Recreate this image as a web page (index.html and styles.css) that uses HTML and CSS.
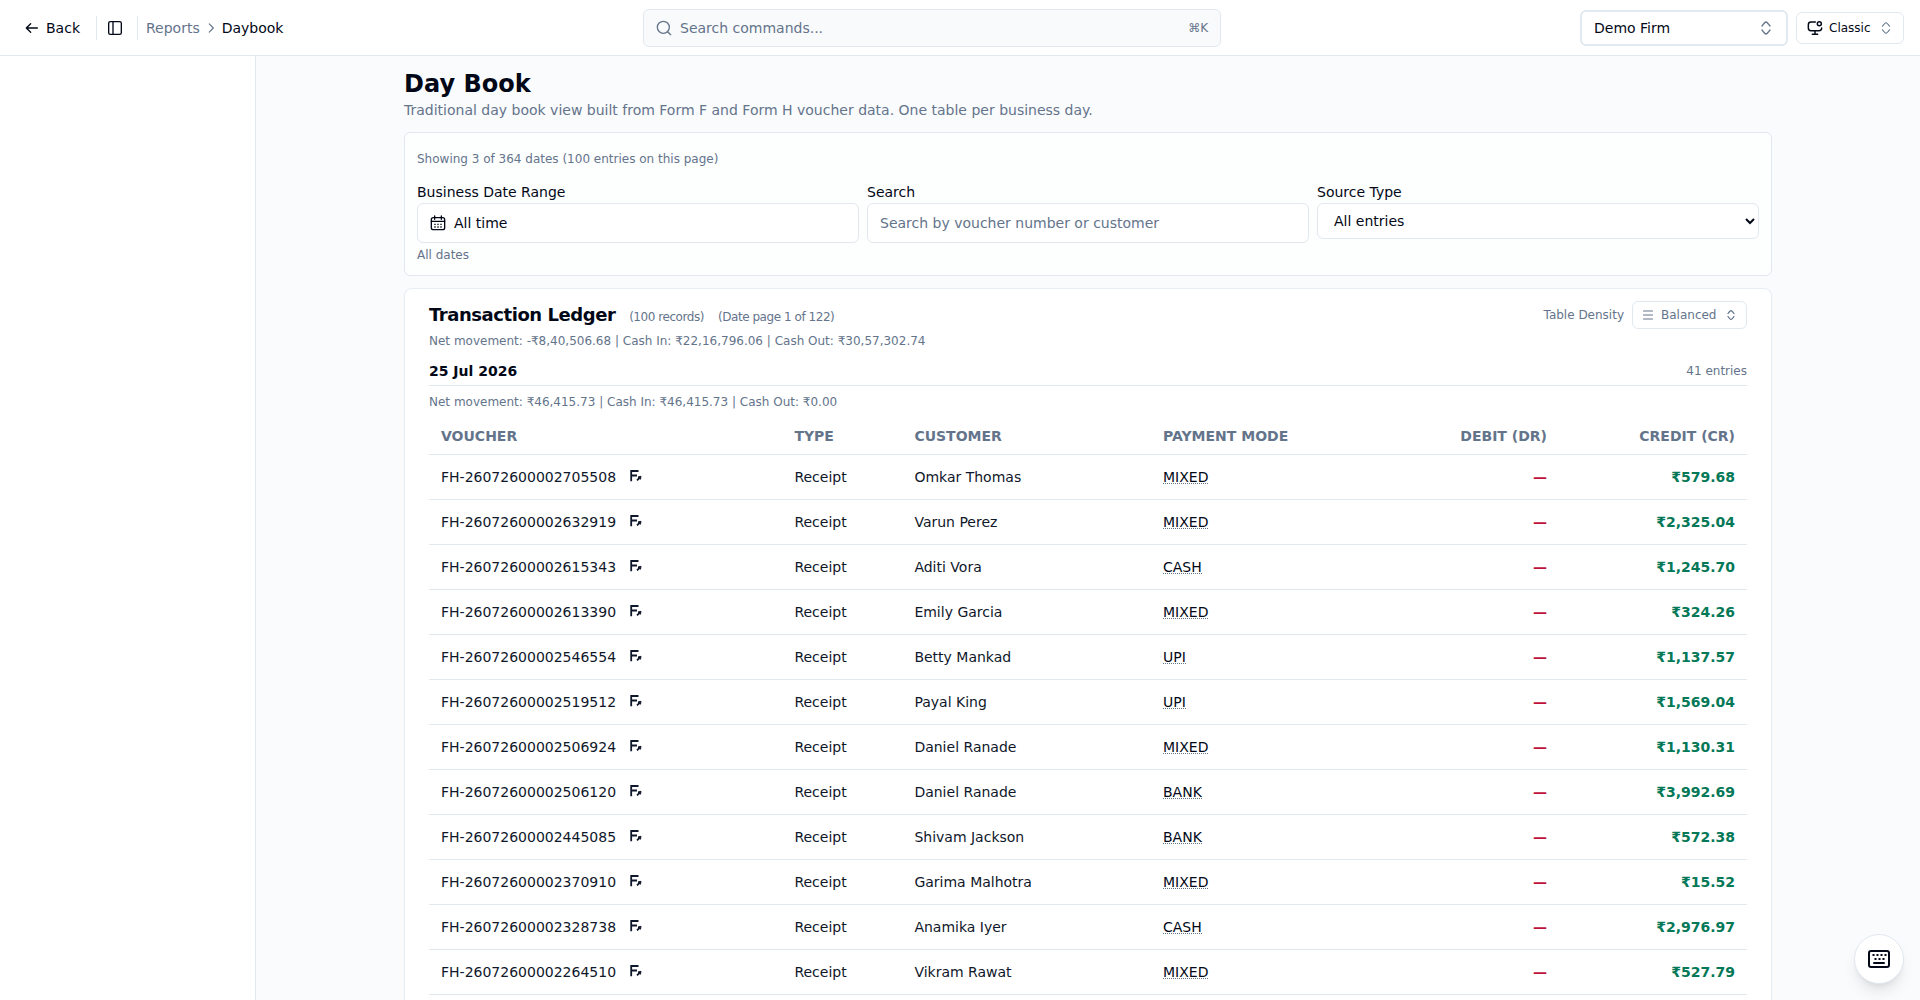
FILE: index.html
```html
<!DOCTYPE html>
<html lang="en">
<head>
    <meta charset="UTF-8">
    <meta name="viewport" content="width=device-width, initial-scale=1.0">
    <title>Day Book</title>
    <link rel="stylesheet" href="styles.css">
</head>
<body>
    <svg class="sprite">
        <symbol id="updown" viewBox="0 0 24 24"><path d="M18 9s-4.400-6-6-6-6 6-6 6M18 15s-4.400 6-6 6-6-6-6-6"/></symbol>
        <symbol id="open-form" viewBox="0 0 14 14"><path d="M2.200 12.300V2H9.500M2.200 6.500H8M8 11.300L10.500 9"/><path class="tip" d="M9 8L12 7.300L11.500 10.200Z"/></symbol>
    </svg>

    <header class="topbar">
        <div class="topbar-left">
            <button class="back">
                <svg class="icon" viewBox="0 0 24 24"><path d="M4 12h16M10 5.500L3.500 12l6.500 6.500"/></svg>
                Back
            </button>
            <span class="divider"></span>
            <button class="toggle">
                <svg class="icon" viewBox="0 0 24 24"><rect x="2.500" y="2.500" width="19" height="19" rx="2.500"/><path d="M9 2.500v19"/></svg>
            </button>
            <span class="divider"></span>
            <nav class="crumbs">
                <span>Reports</span>
                <svg class="crumb-icon" viewBox="0 0 24 24"><path d="M9 5l7 7-7 7"/></svg>
                <b>Daybook</b>
            </nav>
        </div>
        <button class="command">
            <svg class="icon" viewBox="0 0 24 24"><circle cx="11" cy="11" r="9"/><path d="M17.500 17.500L22 22"/></svg>
            <span>Search commands...</span>
            <kbd>⌘K</kbd>
        </button>
        <div class="topbar-right">
            <button class="firm">Demo Firm <svg class="icon"><use href="#updown"/></svg></button>
            <button class="layout">
                <svg class="layout-icon" viewBox="0 0 24 24"><path d="M12.500 3H6C3 3 2 4 2 7v5c0 3 1 4 4 4h12c3 0 4-1 4-4M12 16v5M8 21.500h8"/><circle cx="18.500" cy="5.500" r="3"/></svg>
                Classic
                <svg class="layout-arrows"><use href="#updown"/></svg>
            </button>
        </div>
    </header>

    <div class="shell">
        <aside class="sidebar"></aside>
        <main class="content">
            <h1>Day Book</h1>
            <p class="subtitle">Traditional day book view built from Form F and Form H voucher data. One table per business day.</p>

            <section class="filters">
                <p class="note">Showing 3 of 364 dates (100 entries on this page)</p>
                <div class="filter-grid">
                    <div class="field">
                        <label>Business Date Range</label>
                        <button class="control date-btn">
                            <svg class="icon" viewBox="0 0 24 24"><rect x="2" y="4" width="20" height="18" rx="3"/><path d="M7 1.500v5M17 1.500v5M2 9.500h20"/><path class="dots" d="M6.500 14h2M11 14h2M15.500 14h2M6.500 18h2M11 18h2M15.500 18h2"/></svg>
                            All time
                        </button>
                        <p class="note">All dates</p>
                    </div>
                    <div class="field">
                        <label for="search">Search</label>
                        <input class="control" id="search" type="text" placeholder="Search by voucher number or customer">
                    </div>
                    <div class="field">
                        <label for="source">Source Type</label>
                        <select class="control" id="source">
                            <option>All entries</option>
                        </select>
                    </div>
                </div>
            </section>

            <section class="ledger">
                <div class="ledger-head">
                    <h2>Transaction Ledger <span>(100 records)</span><span>(Date page 1 of 122)</span></h2>
                    <div class="density">
                        Table Density
                        <button class="density-btn">
                            <svg class="density-icon" viewBox="0 0 24 24"><path d="M3 4h18M3 12h18M3 20h18"/></svg>
                            Balanced
                            <svg class="density-icon arrows"><use href="#updown"/></svg>
                        </button>
                    </div>
                </div>
                <p class="totals">Net movement: -₹8,40,506.68 | Cash In: ₹22,16,796.06 | Cash Out: ₹30,57,302.74</p>
                <div class="day-head">
                    <h3>25 Jul 2026</h3>
                    <span>41 entries</span>
                </div>
                <p class="totals day-totals">Net movement: ₹46,415.73 | Cash In: ₹46,415.73 | Cash Out: ₹0.00</p>
                <table>
                    <thead>
                        <tr>
                            <th class="col-voucher">Voucher</th>
                            <th class="col-type">Type</th>
                            <th class="col-customer">Customer</th>
                            <th class="col-mode">Payment Mode</th>
                            <th class="col-debit num">Debit (DR)</th>
                            <th class="col-credit num">Credit (CR)</th>
                        </tr>
                    </thead>
                    <tbody id="rows"></tbody>
                </table>
            </section>
        </main>
    </div>

    <button class="shortcuts">
        <svg viewBox="0 0 24 24"><rect x="2" y="4" width="20" height="16" rx="2"/><path d="M7 16h10"/><path class="keys" d="M5.500 8h2M9.500 8h2M13.500 8h2M17.500 8h2M7.500 12h2M11.500 12h2M15.500 12h2"/></svg>
    </button>

    <script>
        const entries = [
            ['FH-26072600002705508', 'Omkar Thomas', 'MIXED', '₹579.68'],
            ['FH-26072600002632919', 'Varun Perez', 'MIXED', '₹2,325.04'],
            ['FH-26072600002615343', 'Aditi Vora', 'CASH', '₹1,245.70'],
            ['FH-26072600002613390', 'Emily Garcia', 'MIXED', '₹324.26'],
            ['FH-26072600002546554', 'Betty Mankad', 'UPI', '₹1,137.57'],
            ['FH-26072600002519512', 'Payal King', 'UPI', '₹1,569.04'],
            ['FH-26072600002506924', 'Daniel Ranade', 'MIXED', '₹1,130.31'],
            ['FH-26072600002506120', 'Daniel Ranade', 'BANK', '₹3,992.69'],
            ['FH-26072600002445085', 'Shivam Jackson', 'BANK', '₹572.38'],
            ['FH-26072600002370910', 'Garima Malhotra', 'MIXED', '₹15.52'],
            ['FH-26072600002328738', 'Anamika Iyer', 'CASH', '₹2,976.97'],
            ['FH-26072600002264510', 'Vikram Rawat', 'MIXED', '₹527.79']
        ];

        document.getElementById('rows').innerHTML = entries.map(([voucher, customer, mode, credit]) => `
            <tr>
                <td><div class="voucher">${voucher}<svg><use href="#open-form"/></svg></div></td>
                <td>Receipt</td>
                <td>${customer}</td>
                <td><span class="mode">${mode}</span></td>
                <td class="num debit">—</td>
                <td class="num credit">${credit}</td>
            </tr>`).join('');
    </script>
</body>
</html>
```
FILE: styles.css
```css
* {
    box-sizing: border-box;
}
body {
    margin: 0;
    height: 100vh;
    overflow: hidden;
    display: flex;
    flex-direction: column;
    font-family: "DejaVu Sans", sans-serif;
    font-size: 14px;
    line-height: 20px;
    color: #020817;
    background: #fff;
}
h1, h2, h3, p {
    margin: 0;
}
button, input, select {
    font: inherit;
    color: inherit;
}
button {
    display: flex;
    align-items: center;
    border: 0;
    padding: 0;
    background: none;
}
svg {
    flex: none;
    fill: none;
    stroke: currentColor;
    stroke-width: 2;
    stroke-linecap: round;
    stroke-linejoin: round;
}
.sprite {
    display: none;
}
.icon {
    width: 16px;
    height: 16px;
}

/* top bar */
.topbar {
    display: flex;
    align-items: center;
    flex: none;
    height: 56px;
    padding: 0 16px 0 24px;
    border-bottom: 1px solid #e2e8f0;
}
.topbar-left {
    display: flex;
    align-items: center;
    width: 619px;
}
.back {
    gap: 6px;
    margin-right: 16px;
}
.divider {
    width: 1px;
    height: 24px;
    background: #e2e8f0;
}
.toggle {
    width: 40px;
    padding-left: 10px;
}
.crumbs {
    display: flex;
    align-items: center;
    gap: 4px;
    margin-left: 8px;
    color: #64748b;
}
.crumbs b {
    font-weight: 400;
    color: #020817;
}
.crumb-icon {
    width: 14px;
    height: 14px;
}
.command {
    width: 578px;
    height: 38px;
    padding: 0 12px;
    gap: 8px;
    border: 1px solid #e2e8f0;
    border-radius: 6px;
    background: #f9fafc;
    color: #64748b;
}
.command kbd {
    margin-left: auto;
    font-family: inherit;
    font-size: 12px;
}
.topbar-right {
    display: flex;
    align-items: center;
    gap: 8px;
    margin-left: auto;
}
.firm {
    justify-content: space-between;
    width: 208px;
    height: 36px;
    padding: 0 12px 0 12px;
    border: 2px solid #e2e8f0;
    border-radius: 6px;
}
.firm svg, .layout-arrows {
    color: #64748b;
}
.layout {
    width: 108px;
    height: 32px;
    padding: 0 10px;
    font-size: 12px;
    border: 1px solid #e2e8f0;
    border-radius: 6px;
}
.layout-icon {
    width: 16px;
    height: 16px;
    margin-right: 6px;
    stroke-width: 2.2;
}
.layout-arrows {
    width: 14px;
    height: 14px;
    margin-left: auto;
}

.shell {
    display: flex;
    flex: 1;
    min-height: 0;
}
.sidebar {
    width: 256px;
    flex: none;
    border-right: 1px solid #e2e8f0;
}
.content {
    flex: 1;
    padding: 12px 148px 0;
    overflow: hidden;
    background: #fafbfd;
}
h1 {
    font-size: 24px;
    line-height: 32px;
}
.subtitle {
    color: #64748b;
}

/* filters */
.filters {
    height: 144px;
    margin-top: 12px;
    padding: 18px 12px 0;
    border: 1px solid #e2e8f0;
    border-radius: 6px;
    background: #fdfefe;
}
.note, .totals {
    font-size: 12px;
    line-height: 16px;
    color: #64748b;
}
.filter-grid {
    display: grid;
    grid-template-columns: repeat(3, 1fr);
    gap: 8px;
    margin-top: 15px;
}
.field label {
    display: block;
    height: 21px;
}
.control {
    display: flex;
    width: 100%;
    height: 40px;
    padding: 0 12px;
    border: 1px solid #e2e8f0;
    border-radius: 6px;
    background: #fff;
}
.control::placeholder {
    color: #64748b;
    opacity: 1;
}
select.control {
    height: 36px;
}
.date-btn {
    gap: 8px;
}
.dots {
    stroke-linecap: butt;
}
.field .note {
    margin-top: 4px;
}

/* ledger */
.ledger {
    height: 900px;
    margin-top: 12px;
    padding: 12px 24px;
    border: 1px solid #e9eef4;
    border-radius: 8px;
    background: #fff;
    box-shadow: 0 1px 2px rgba(0, 0, 0, 0.05);
}
.ledger-head {
    display: flex;
    align-items: center;
    justify-content: space-between;
    height: 28px;
}
h2 {
    padding-top: 2px;
    font-size: 18px;
    line-height: 28px;
    letter-spacing: -0.45px;
}
h2 span {
    margin-left: 8px;
    font-size: 12px;
    font-weight: 400;
    color: #64748b;
}
h2 span + span {
    margin-left: 14px;
}
.density {
    display: flex;
    align-items: center;
    gap: 8px;
    font-size: 12px;
    color: #64748b;
}
.density-btn {
    width: 115px;
    height: 28px;
    padding: 0 9px;
    border: 1px solid #e2e8f0;
    border-radius: 6px;
}
.density-icon {
    width: 12px;
    height: 12px;
    margin-right: 7px;
    stroke-width: 2.3;
}
.density-icon.arrows {
    margin: 0 0 0 auto;
    stroke-width: 2.5;
}
.totals {
    margin-top: 4px;
}
.day-head {
    display: flex;
    align-items: center;
    justify-content: space-between;
    height: 29px;
    margin-top: 8px;
    padding-bottom: 1px;
    border-bottom: 1px solid #e2e8f0;
    font-size: 12px;
    color: #64748b;
}
h3 {
    font-size: 14px;
    color: #020817;
}
.day-totals {
    margin: 8px 0;
}
table {
    width: 100%;
    table-layout: fixed;
    border-spacing: 0;
}
th, td {
    padding: 0 12px;
    text-align: left;
    border-bottom: 1px solid #e2e8f0;
}
th {
    height: 37px;
    color: #64748b;
    text-transform: uppercase;
}
td {
    height: 45px;
    color: #0f172a;
}
.col-voucher { width: 353.4px; }
.col-type { width: 120px; }
.col-customer { width: 248.6px; }
.col-mode { width: 220px; }
.col-debit { width: 188px; }
.col-credit { width: 188px; }
.num {
    text-align: right;
}
.voucher {
    display: flex;
    align-items: center;
    gap: 12.5px;
}
.voucher svg {
    width: 14px;
    height: 14px;
    margin-top: -2px;
    stroke-width: 1.8;
    stroke-linecap: butt;
    stroke-linejoin: miter;
}
.tip {
    fill: currentColor;
    stroke-width: 1;
}
.mode {
    display: inline-block;
    border-bottom: 1px dotted #64748b;
    line-height: 12px;
    color: #020817;
}
.num.debit {
    font-weight: 700;
    color: #be123c;
}
.num.credit {
    font-weight: 700;
    color: #047857;
}

/* floating keyboard shortcuts button */
.shortcuts {
    position: absolute;
    right: 16px;
    bottom: 16px;
    justify-content: center;
    width: 50px;
    height: 50px;
    border: 1px solid #e2e8f0;
    border-radius: 50%;
    background: #fff;
    box-shadow: 0 10px 15px -3px rgba(0, 0, 0, 0.1), 0 4px 6px -4px rgba(0, 0, 0, 0.1);
}
.shortcuts svg {
    width: 24px;
    height: 24px;
}
.shortcuts .keys {
    stroke-linecap: butt;
}
```
